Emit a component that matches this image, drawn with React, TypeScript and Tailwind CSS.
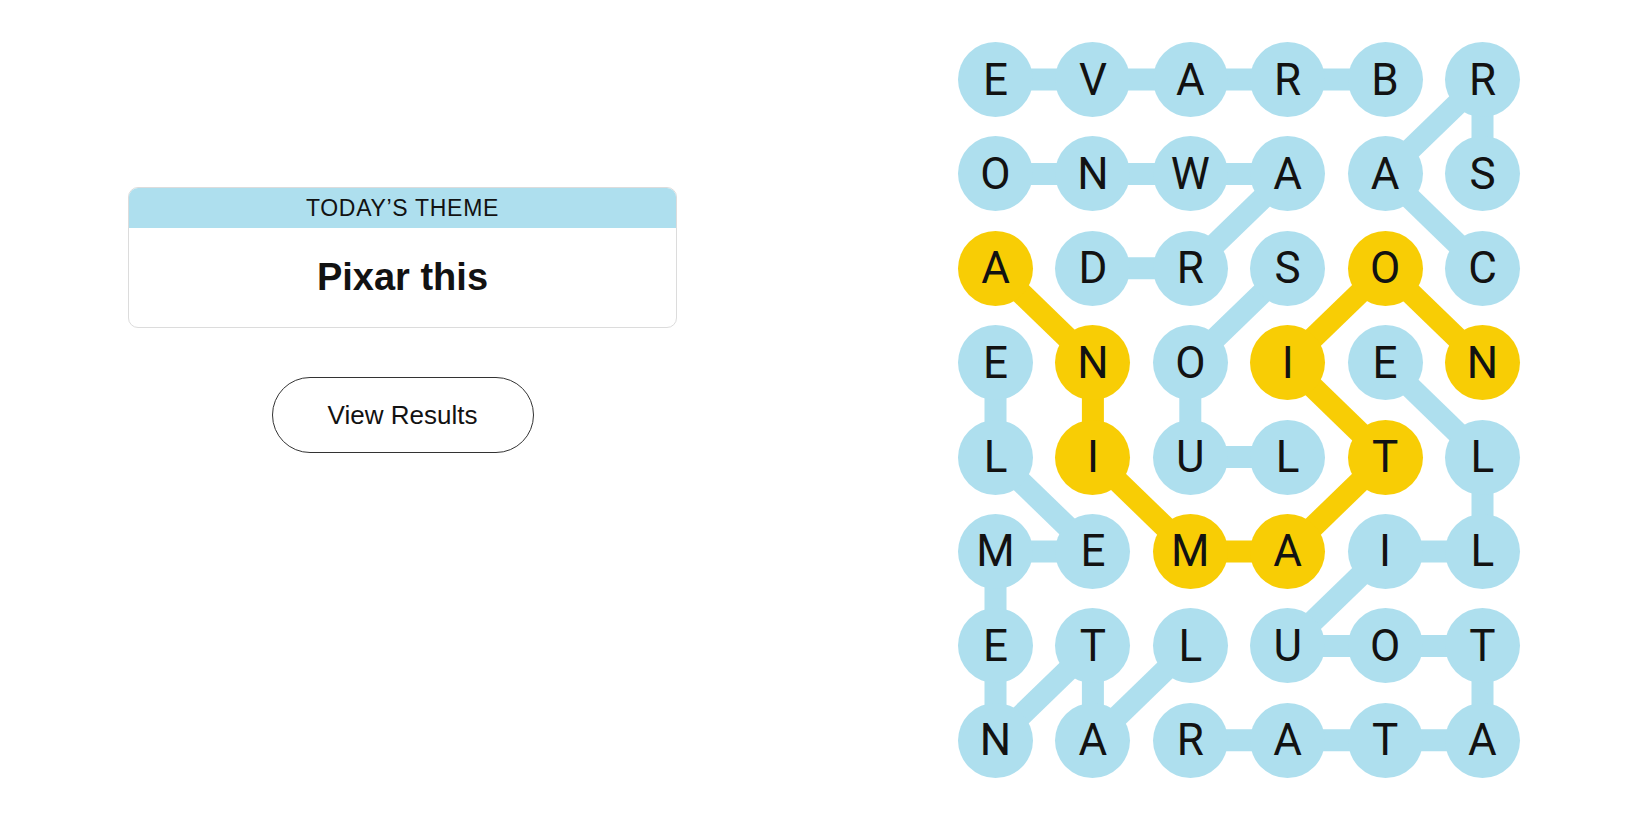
const LETTERS = [
  "EVARBR",
  "ONWAAS",
  "ADRSOC",
  "ENOIEN",
  "LIULTL",
  "MEMAIL",
  "ETLUOT",
  "NARATA",
]

const WORDS: { cells: [number, number][]; spangram?: boolean }[] = [
  { cells: [[0, 4], [0, 3], [0, 2], [0, 1], [0, 0]] }, // BRAVE
  { cells: [[1, 0], [1, 1], [1, 2], [1, 3], [2, 2], [2, 1]] }, // ONWARD
  { cells: [[2, 5], [1, 4], [0, 5], [1, 5]] }, // CARS
  { cells: [[2, 3], [3, 2], [4, 2], [4, 3]] }, // SOUL
  {
    cells: [[2, 0], [3, 1], [4, 1], [5, 2], [5, 3], [4, 4], [3, 3], [2, 4], [3, 5]],
    spangram: true,
  }, // ANIMATION
  { cells: [[3, 0], [4, 0], [5, 1], [5, 0], [6, 0], [7, 0], [6, 1], [7, 1], [6, 2]] }, // ELEMENTAL
  {
    cells: [[7, 2], [7, 3], [7, 4], [7, 5], [6, 5], [6, 4], [6, 3], [5, 4], [5, 5], [4, 5], [3, 4]],
  }, // RATATOUILLE
]

const BLUE = "#aedfee"
const YELLOW = "#f8cd05"
const COL = 97.4
const ROW = 94.4
const R = 37.5

const spanCells = new Set(
  WORDS.filter((w) => w.spangram).flatMap((w) => w.cells.map(([r, c]) => `${r}-${c}`))
)

function Board() {
  return (
    <div className="relative">
      <svg className="absolute inset-0" width={562} height={736}>
        {WORDS.map((w, i) =>
          w.cells.slice(1).map(([r, c], j) => {
            const [pr, pc] = w.cells[j]
            return (
              <line
                key={`${i}-${j}`}
                x1={R + pc * COL}
                y1={R + pr * ROW}
                x2={R + c * COL}
                y2={R + r * ROW}
                stroke={w.spangram ? YELLOW : BLUE}
                strokeWidth={22}
              />
            )
          })
        )}
      </svg>
      <div className="relative grid grid-cols-[repeat(6,75px)] gap-x-[22.4px] gap-y-[19.4px] font-['Roboto',sans-serif]">
        {LETTERS.flatMap((row, r) =>
          row.split("").map((ch, c) => (
            <button
              key={`${r}-${c}`}
              className={`w-[75px] h-[75px] rounded-full flex items-center justify-center text-[44px] text-[#121212] leading-none ${
                spanCells.has(`${r}-${c}`) ? "bg-[#f8cd05]" : "bg-[#aedfee]"
              }`}
            >
              {ch}
            </button>
          ))
        )}
      </div>
    </div>
  )
}

export default function App() {
  return (
    <div className="w-[1650px] h-[825px] bg-white flex font-['Liberation_Sans',Arial,sans-serif] text-[#121212]">
      <div className="w-[805px] flex flex-col items-center pt-[187px]">
        <div className="w-[549px] rounded-[10px] border border-[#dcdcdc] overflow-hidden">
          <div className="h-[40px] bg-[#aedfee] flex items-center justify-center text-[23px] tracking-[0.7px] uppercase">
            Today’s Theme
          </div>
          <div className="h-[99px] flex items-center justify-center text-[38px] font-bold">
            Pixar this
          </div>
        </div>
        <button className="mt-[49px] w-[262px] h-[76px] rounded-full border border-[#333] text-[26px]">
          View Results
        </button>
      </div>
      <div className="ml-[153px] pt-[42px]">
        <Board />
      </div>
    </div>
  )
}
